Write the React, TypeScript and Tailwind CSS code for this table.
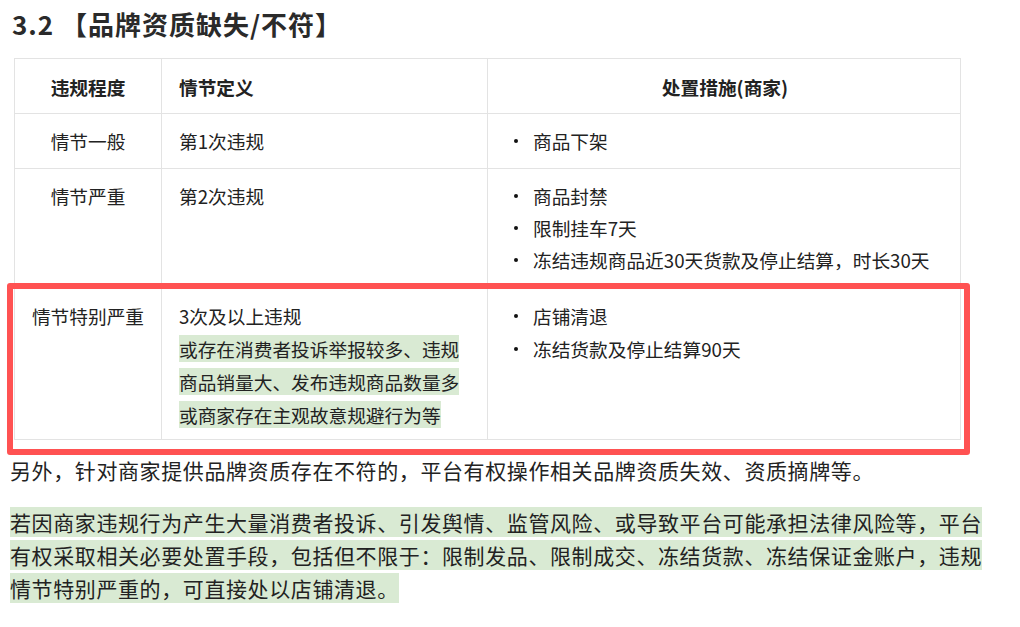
const rows = [
  {
    level: "情节一般",
    def: ["第1次违规"],
    measures: ["商品下架"],
    pad: "pt-[11px] pb-[11px]",
  },
  {
    level: "情节严重",
    def: ["第2次违规"],
    measures: ["商品封禁", "限制挂车7天", "冻结违规商品近30天货款及停止结算，时长30天"],
    pad: "pt-[11px] pb-[9px]",
  },
];

function Bullets({ items }: { items: string[] }) {
  return (
    <div className="flex flex-col">
      {items.map((m) => (
        <div key={m} className="flex items-center">
          <span className="mr-[15px] h-[4px] w-[4px] shrink-0 rounded-full bg-[#111]" />
          <span>{m}</span>
        </div>
      ))}
    </div>
  );
}

const hl = ["或存在消费者投诉举报较多、违规", "商品销量大、发布违规商品数量多", "或商家存在主观故意规避行为等"];

export default function App() {
  return (
    <div
      className="relative min-h-[627px] bg-white text-[#222] pt-[6px]"
      style={{ fontFamily: '"Noto Sans CJK SC", "Noto Sans", sans-serif' }}
    >
      <h2 className="pl-[12px] text-[26px] font-bold leading-[36px] tracking-[1px] text-[#2a2a2a]">
        3.2 【品牌资质缺失/不符】
      </h2>

      <div className="mt-[16px] ml-[14px] w-[947px] text-[18.7px] leading-[32px]">
        <div className="grid grid-cols-[147px_326px_474px] border border-[#e3e3e3] font-bold">
          <div className="border-r border-[#e3e3e3] pt-3 pb-[10px] text-center">违规程度</div>
          <div className="border-r border-[#e3e3e3] pt-3 pb-[10px] pl-[17px]">情节定义</div>
          <div className="pt-3 pb-[10px] text-center">处置措施(商家)</div>
        </div>
        {rows.map((r) => (
          <div
            key={r.level}
            className="grid grid-cols-[147px_326px_474px] border-x border-b border-[#e3e3e3]"
          >
            <div className={`border-r border-[#e3e3e3] text-center ${r.pad}`}>{r.level}</div>
            <div className={`border-r border-[#e3e3e3] pl-[17px] ${r.pad}`}>
              {r.def.map((d) => (
                <div key={d}>{d}</div>
              ))}
            </div>
            <div className={`pl-[26px] ${r.pad}`}>
              <Bullets items={r.measures} />
            </div>
          </div>
        ))}
        <div className="grid grid-cols-[147px_326px_474px] border-x border-b border-[#e3e3e3] leading-[33px]">
          <div className="border-r border-[#e3e3e3] pt-[13px] text-center">情节特别严重</div>
          <div className="border-r border-[#e3e3e3] pt-[13px] pb-[8px] pl-[17px]">
            <div>3次及以上违规</div>
            {hl.map((t) => (
              <div key={t}>
                <span className="bg-[#d9ead3]">{t}</span>
              </div>
            ))}
          </div>
          <div className="pt-[13px] pl-[26px]">
            <Bullets items={["店铺清退", "冻结货款及停止结算90天"]} />
          </div>
        </div>
      </div>

      <div className="mt-[14px] ml-[10px] w-[978px] text-[21px] leading-[33px] tracking-[0.6px]">
        <p>另外，针对商家提供品牌资质存在不符的，平台有权操作相关品牌资质失效、资质摘牌等。</p>
        <p className="mt-[19px]">
          <span className="bg-[#d9ead3]">
            若因商家违规行为产生大量消费者投诉、引发舆情、监管风险、或导致平台可能承担法律风险等，平台有权采取相关必要处置手段，包括但不限于：限制发品、限制成交、冻结货款、冻结保证金账户，违规情节特别严重的，可直接处以店铺清退。
          </span>
        </p>
      </div>

      <div className="pointer-events-none absolute left-[7px] top-[283px] h-[172px] w-[963px] rounded-[3px] border-[6px] border-[#ff5252]" />
    </div>
  );
}
